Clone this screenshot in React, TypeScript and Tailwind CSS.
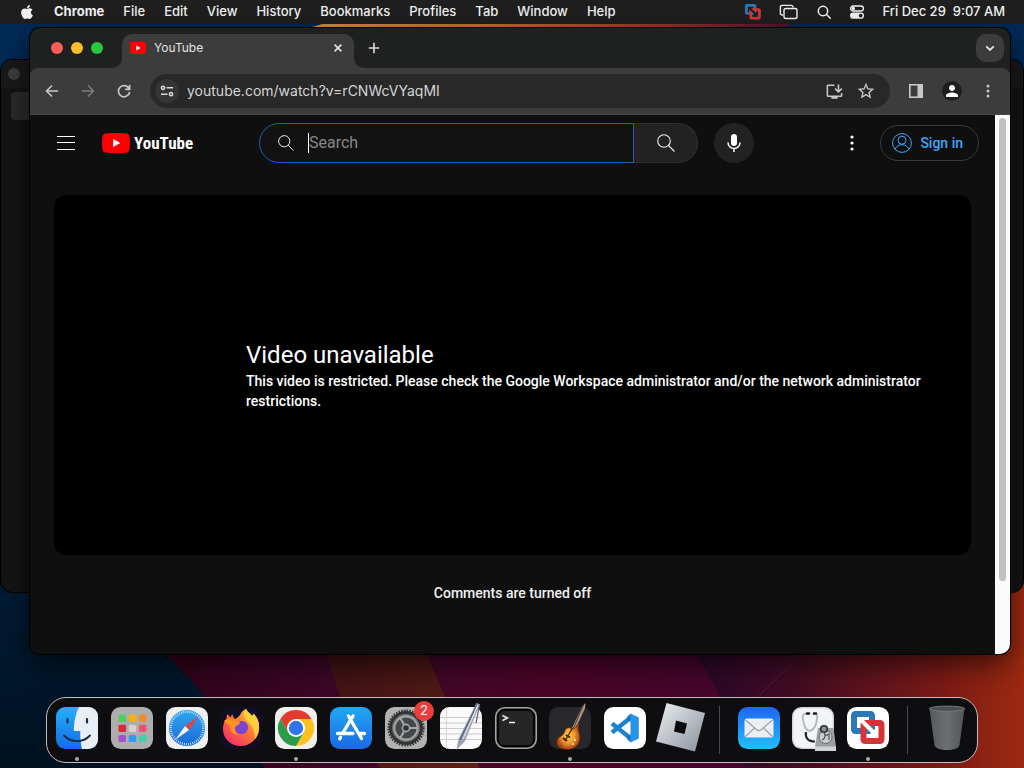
import { FaApple } from "react-icons/fa"
import { MdInstallDesktop, MdPerson, MdStarBorder } from "react-icons/md"

const menus = ["File", "Edit", "View", "History", "Bookmarks", "Profiles", "Tab", "Window", "Help"]

function Wallpaper() {
  return (
    <svg className="absolute inset-0 h-full w-full" viewBox="0 0 1024 768" preserveAspectRatio="none" aria-hidden="true">
      <defs>
        <linearGradient id="wall-top" x1="0" x2="1" y1="0" y2="0">
          <stop offset="0" stopColor="#d99038" />
          <stop offset="0.35" stopColor="#d2692f" />
          <stop offset="0.7" stopColor="#a8322a" />
          <stop offset="1" stopColor="#4a1030" />
        </linearGradient>
        <linearGradient id="wall-side" x1="0" x2="0" y1="0" y2="1">
          <stop offset="0" stopColor="#002b57" />
          <stop offset="0.75" stopColor="#001c36" />
          <stop offset="1" stopColor="#001220" />
        </linearGradient>
        <linearGradient id="wall-magenta" x1="0" x2="1" y1="0" y2="0">
          <stop offset="0" stopColor="#2e0418" />
          <stop offset="0.22" stopColor="#3d0728" />
          <stop offset="0.45" stopColor="#4a0526" />
          <stop offset="1" stopColor="#3a0836" />
        </linearGradient>
        <linearGradient id="wall-rust" x1="0" x2="1" y1="0" y2="1">
          <stop offset="0" stopColor="#3a1014" />
          <stop offset="1" stopColor="#5e2016" />
        </linearGradient>
        <linearGradient id="wall-red" x1="0" x2="1" y1="0" y2="0">
          <stop offset="0" stopColor="#26062a" />
          <stop offset="0.35" stopColor="#440d22" />
          <stop offset="0.75" stopColor="#7a1a16" />
          <stop offset="1" stopColor="#9c2a10" />
        </linearGradient>
      </defs>
      <rect width="1024" height="768" fill="url(#wall-side)" />
      <path d="M308 28 L330 22 H800 L780 28 Z" fill="url(#wall-top)" />
      <path d="M160 650 Q185 672 205 697 L265 768 H1024 V560 Z" fill="url(#wall-magenta)" />
      <path d="M322 640 L340 697 L380 768 H480 L445 697 L425 650 Z" fill="url(#wall-rust)" />
      <path d="M685 640 Q705 665 720 697 L745 768 H1024 V560 Z" fill="url(#wall-red)" />
      <path d="M795 660 L755 700" stroke="#5b1740" strokeWidth="1" />
    </svg>
  )
}

function VmGlyph({ arrow }: { arrow: string }) {
  return (
    <>
      <rect x="7" y="7" width="18" height="17" rx="1.500" fill="none" stroke="#2a78b5" strokeWidth="6" />
      <rect x="16.500" y="16" width="18" height="18" rx="1.500" fill="none" stroke="#d7343a" strokeWidth="6" />
      <path d="M14 13l13 13" stroke={arrow} strokeWidth="4" />
      <path d="M30 20v10.500H19.500Z" fill={arrow} />
    </>
  )
}

function MenuBar() {
  return (
    <header className="relative flex h-6 items-center justify-between bg-[#1f1f1f] px-[19px] text-[13px] font-medium text-[#f1f1f1]">
      <nav className="flex items-center gap-[19px]" aria-label="Menu bar">
        <button aria-label="Apple menu">
          <FaApple size={16} />
        </button>
        <button className="font-bold">Chrome</button>
        {menus.map((menu) => (
          <button key={menu}>{menu}</button>
        ))}
      </nav>
      <div className="flex items-center gap-[17px]">
        <button aria-label="VMware">
          <svg width="18" height="18" viewBox="2 2 38 38" aria-hidden="true">
            <VmGlyph arrow="#1f1f1f" />
          </svg>
        </button>
        <button aria-label="Mission Control">
          <svg width="20" height="18" viewBox="0 0 20 18" fill="none" stroke="currentColor" strokeWidth="1.400" aria-hidden="true">
            <path d="M4 12H3a1.600 1.600 0 0 1-1.600-1.600V4A1.600 1.600 0 0 1 3 2.400h9.500A1.600 1.600 0 0 1 14 4v.6" />
            <rect x="5" y="5.500" width="13" height="10" rx="1.800" />
          </svg>
        </button>
        <button aria-label="Spotlight">
          <svg width="16" height="16" viewBox="0 0 16 16" fill="none" stroke="currentColor" strokeWidth="1.500" aria-hidden="true">
            <circle cx="7" cy="7" r="4.700" />
            <path d="M10.500 10.500L14.300 14.300" strokeLinecap="round" />
          </svg>
        </button>
        <button aria-label="Control Center">
          <svg width="16" height="16" viewBox="0 0 16 16" aria-hidden="true">
            <rect x="1.600" y="2" width="12.800" height="5" rx="2.500" fill="none" stroke="currentColor" strokeWidth="1.300" />
            <circle cx="4.300" cy="4.500" r="1.700" fill="currentColor" />
            <rect x="1" y="8.500" width="14" height="6.300" rx="3.100" fill="currentColor" />
            <circle cx="11.700" cy="11.600" r="1.900" fill="#1f1f1f" />
          </svg>
        </button>
        <time className="whitespace-pre">Fri Dec 29  9:07 AM</time>
      </div>
    </header>
  )
}

function BackWindow() {
  return (
    <div className="absolute inset-x-0 bottom-[175px] top-[59px] overflow-hidden rounded-xl border border-black bg-[#141414]">
      <div className="flex h-7 items-center bg-[#191919] pl-[7px]">
        <span className="h-3 w-3 rounded-full bg-[#3d3d3d]" />
      </div>
      <div className="ml-2.5 mt-1 h-7 w-10 rounded bg-[#2a2a2a]" />
    </div>
  )
}

function TabStrip() {
  return (
    <div className="flex h-10 items-end bg-[#1f2121] pr-1.5">
      <div className="mb-3.5 ml-[21px] flex gap-2">
        <button aria-label="Close window" className="h-3 w-3 rounded-full bg-[#f95e57]" />
        <button aria-label="Minimize window" className="h-3 w-3 rounded-full bg-[#fbbc2e]" />
        <button aria-label="Zoom window" className="h-3 w-3 rounded-full bg-[#28c840]" />
      </div>
      <div className="relative ml-[19px] flex h-[34px] w-[232px] items-center rounded-t-[10px] bg-[#3c3c3c] pb-1.5 pl-2 pr-2">
        <svg className="absolute -left-2.5 bottom-0" width="10" height="10" aria-hidden="true">
          <path d="M10 0V10H0A10 10 0 0 0 10 0Z" fill="#3c3c3c" />
        </svg>
        <svg className="absolute -right-2.5 bottom-0" width="10" height="10" aria-hidden="true">
          <path d="M0 0V10H10A10 10 0 0 1 0 0Z" fill="#3c3c3c" />
        </svg>
        <svg width="16" height="12" viewBox="0 0 16 12" aria-hidden="true">
          <rect width="16" height="12" rx="3" fill="#f00" />
          <path d="M6.300 3.400v5.200L10.800 6Z" fill="#fff" />
        </svg>
        <span className="ml-2 flex-1 text-xs text-[#e3e3e3]">YouTube</span>
        <button aria-label="Close tab" className="grid h-4 w-4 place-items-center text-[#e3e3e3]">
          <svg width="8" height="8" viewBox="0 0 8 8" stroke="currentColor" strokeWidth="1.600" aria-hidden="true">
            <path d="M.6.6l6.800 6.800M7.400.6L.6 7.400" />
          </svg>
        </button>
      </div>
      <button aria-label="New tab" className="mb-1.5 ml-1.5 grid h-7 w-7 place-items-center text-[#dcdcdc]">
        <svg width="12" height="12" viewBox="0 0 12 12" stroke="currentColor" strokeWidth="1.600" aria-hidden="true">
          <path d="M6 .8v10.400M.8 6h10.400" />
        </svg>
      </button>
      <button aria-label="Search tabs" className="mb-1.5 ml-auto grid h-7 w-7 place-items-center rounded-[10px] bg-[#3c3c3c] text-[#e3e3e3]">
        <svg width="10" height="7" viewBox="0 0 10 7" fill="none" stroke="currentColor" strokeWidth="1.800" aria-hidden="true">
          <path d="M1.300 1.300L5 5l3.700-3.700" />
        </svg>
      </button>
    </div>
  )
}

const toolButton = "grid h-7 w-7 shrink-0 place-items-center rounded-full text-[#c7c7c7]"

function Toolbar() {
  return (
    <div className="flex h-[47px] items-center gap-2 rounded-t-lg border-b border-[#484848] bg-[#3c3c3c] px-2">
      <button aria-label="Back" className={toolButton}>
        <svg width="14" height="14" viewBox="0 0 14 14" fill="none" stroke="currentColor" strokeWidth="1.600" aria-hidden="true">
          <path d="M13 7H2M7 1.500L1.500 7 7 12.500" />
        </svg>
      </button>
      <button aria-label="Forward" disabled className={toolButton}>
        <svg width="14" height="14" viewBox="0 0 14 14" fill="none" stroke="#7c7c7c" strokeWidth="1.600" aria-hidden="true">
          <path d="M1 7h11M7 1.500L12.500 7 7 12.500" />
        </svg>
      </button>
      <button aria-label="Reload" className={toolButton}>
        <svg width="14" height="14" viewBox="0 0 14 14" fill="none" stroke="currentColor" strokeWidth="1.700" aria-hidden="true">
          <path d="M12 4.500A5.600 5.600 0 1 0 12.600 8M12.600 1v4.300H8.200" />
        </svg>
      </button>
      <div className="mx-1 flex h-[34px] flex-1 items-center rounded-full bg-[#282828] pl-[5px] pr-2.5">
        <button aria-label="View site information" className="grid h-6 w-6 place-items-center rounded-full bg-[#353535] text-[#dcdcdc]">
          <svg width="14" height="12" viewBox="0 0 14 12" fill="none" stroke="currentColor" strokeWidth="1.500" aria-hidden="true">
            <circle cx="3" cy="2.800" r="1.600" />
            <path d="M6.500 2.800H13M1 9.200h6.500" />
            <circle cx="11" cy="9.200" r="1.600" />
          </svg>
        </button>
        <input
          aria-label="Address"
          className="ml-2 min-w-0 flex-1 bg-transparent text-sm text-[#d5d5d5] outline-none"
          defaultValue="youtube.com/watch?v=rCNWcVYaqMI"
        />
        <button aria-label="Install YouTube" className={toolButton}>
          <MdInstallDesktop size={19} />
        </button>
        <button aria-label="Bookmark this tab" className={`${toolButton} ml-1`}>
          <MdStarBorder size={20} />
        </button>
      </div>
      <button aria-label="Side panel" className={toolButton}>
        <svg width="14" height="14" viewBox="0 0 14 14" aria-hidden="true">
          <rect x=".8" y=".8" width="12.400" height="12.400" fill="none" stroke="currentColor" strokeWidth="1.600" />
          <path d="M8.500 1H13v12H8.500Z" fill="currentColor" />
        </svg>
      </button>
      <button aria-label="Profile" className={toolButton}>
        <span className="grid h-5 w-5 place-items-center rounded-full bg-[#1f1f1f] text-white">
          <MdPerson size={18} />
        </span>
      </button>
      <button aria-label="Chrome menu" className={toolButton}>
        <svg width="4" height="14" viewBox="0 0 4 14" fill="currentColor" aria-hidden="true">
          <circle cx="2" cy="2" r="1.500" />
          <circle cx="2" cy="7" r="1.500" />
          <circle cx="2" cy="12" r="1.500" />
        </svg>
      </button>
    </div>
  )
}

function SearchIcon({ size }: { size: number }) {
  return (
    <svg width={size} height={size} viewBox="0 0 18 18" fill="none" stroke="#f1f1f1" strokeWidth="1.100" aria-hidden="true">
      <circle cx="7" cy="7" r="6.300" />
      <path d="M11.500 11.500l6 6" />
    </svg>
  )
}

function Masthead() {
  return (
    <header className="flex h-14 items-center">
      <div className="flex w-[229px] items-center gap-6 pl-6">
        <button aria-label="Guide" className="grid h-6 w-6 place-items-center">
          <svg width="18" height="14" viewBox="0 0 18 14" stroke="#fff" aria-hidden="true">
            <path d="M0 .5h18M0 6.500h18M0 13.500h18" />
          </svg>
        </button>
        <a href="#" className="flex items-center gap-1 text-white" aria-label="YouTube Home">
          <svg width="28" height="20" viewBox="0 0 28 20" aria-hidden="true">
            <path d="M27.400 3.100A3.500 3.500 0 0 0 25 .6C22.800 0 14 0 14 0S5.200 0 3 .6A3.500 3.500 0 0 0 .6 3.100C0 5.300 0 10 0 10s0 4.700.6 6.900A3.500 3.500 0 0 0 3 19.400C5.200 20 14 20 14 20s8.800 0 11-.6a3.500 3.500 0 0 0 2.400-2.500C28 14.700 28 10 28 10s0-4.700-.6-6.900Z" fill="#f00" />
            <path d="M11.200 5.900v8.200l7.200-4.100Z" fill="#fff" />
          </svg>
          <span className="font-['Roboto_Condensed',Roboto,sans-serif] text-[17px] font-bold leading-5">YouTube</span>
        </a>
      </div>
      <form className="flex h-10 flex-1" onSubmit={(e) => e.preventDefault()}>
        <div className="flex flex-1 items-center rounded-l-full border border-[#1c62b9] bg-[#121212] pl-[18px]">
          <SearchIcon size={16} />
          <span className="ml-3.5 h-5 w-px bg-white" />
          <input aria-label="Search videos" placeholder="Search" className="min-w-0 flex-1 bg-transparent text-base text-white outline-none placeholder:text-[#888]" />
        </div>
        <button aria-label="Search" className="grid w-16 place-items-center rounded-r-full border border-l-0 border-[#303030] bg-[#222]">
          <SearchIcon size={18} />
        </button>
      </form>
      <button aria-label="Search with your voice" className="ml-4 grid h-10 w-10 place-items-center rounded-full bg-[#222]">
        <svg width="14" height="18" viewBox="0 0 14 18" aria-hidden="true">
          <rect x="4" y="0" width="6" height="12" rx="3" fill="#fff" />
          <path d="M1 8.500a6 6 0 0 0 12 0M7 14.500V18" fill="none" stroke="#fff" strokeWidth="1.500" />
        </svg>
      </button>
      <div className="flex w-[241px] items-center justify-end gap-4 pr-4">
        <button aria-label="Settings" className="grid h-6 w-6 place-items-center">
          <svg width="4" height="16" viewBox="0 0 4 16" fill="#fff" aria-hidden="true">
            <circle cx="2" cy="2" r="1.600" />
            <circle cx="2" cy="8" r="1.600" />
            <circle cx="2" cy="14" r="1.600" />
          </svg>
        </button>
        <a href="#" className="flex h-9 items-center gap-2 rounded-full border border-[#3b3b3b] pl-[11px] pr-[15px] text-sm font-medium text-[#3ea6ff]">
          <svg width="20" height="20" viewBox="0 0 20 20" fill="none" stroke="currentColor" aria-hidden="true">
            <circle cx="10" cy="10" r="9.400" />
            <circle cx="10" cy="7.200" r="4" />
            <path d="M3.200 16.500c.8-3 3.400-4.800 6.800-4.800s6 1.800 6.800 4.800" />
          </svg>
          Sign in
        </a>
      </div>
    </header>
  )
}

function ChromeWindow() {
  return (
    <div className="absolute bottom-[114px] left-[30px] right-[14px] top-7 flex flex-col overflow-hidden rounded-[10px] bg-[#1f2121] shadow-[0_0_0_1px_#000,0_10px_28px_rgba(0,0,0,0.6)]">
      <TabStrip />
      <Toolbar />
      <div className="flex min-h-0 flex-1 bg-[#0f0f0f]">
        <main className="flex min-w-0 flex-1 flex-col font-[Roboto,sans-serif] text-white">
          <Masthead />
          <section className="mx-6 mt-6 flex h-[360px] flex-col justify-center rounded-xl bg-black pl-48 pr-5">
            <h1 className="text-2xl leading-8">Video unavailable</h1>
            <p className="text-sm font-medium leading-5">
              This video is restricted. Please check the Google Workspace administrator and/or the network administrator
              restrictions.
            </p>
          </section>
          <p className="mt-7 text-center text-sm font-medium text-[#f1f1f1]">Comments are turned off</p>
        </main>
        <div className="w-[15px] bg-[#fafafa] px-1 pt-[3px]">
          <div className="h-[463px] rounded-full bg-[#c1c1c1]" />
        </div>
      </div>
    </div>
  )
}

function FinderIcon() {
  return (
    <>
      <rect width="42" height="42" rx="9.500" fill="url(#finder-blue)" />
      <path d="M23 0C19.500 7 18 14.500 17.800 24h6.500c-.2 6 .3 12 1.600 18h6.600A9.500 9.500 0 0 0 42 32.500v-23A9.500 9.500 0 0 0 32.500 0Z" fill="#e9eef5" />
      <path d="M11.500 12v3.500M31 12v3.500" stroke="#173049" strokeWidth="2.200" strokeLinecap="round" />
      <path d="M8 28.500c7 7.500 19 7.500 26 0" fill="none" stroke="#173049" strokeWidth="1.900" strokeLinecap="round" />
    </>
  )
}

const padColors = ["#4fd05a", "#f5b318", "#f28c26", "#e0283a", "#d4d4d4", "#f2506e", "#a34fd0", "#3298f0", "#3fd0ac"]

function LaunchpadIcon() {
  return (
    <>
      <rect width="42" height="42" rx="9.500" fill="#adadad" />
      {padColors.map((color, i) => (
        <rect key={color} x={7.500 + (i % 3) * 10.200} y={7.500 + Math.floor(i / 3) * 10.200} width="7.500" height="7.200" rx="1.500" fill={color} />
      ))}
    </>
  )
}

function SafariIcon() {
  return (
    <>
      <rect width="42" height="42" rx="9.500" fill="#eef0f2" />
      <circle cx="21" cy="21" r="18" fill="url(#safari-blue)" />
      <circle cx="21" cy="21" r="16.200" fill="none" stroke="#e5f3fd" strokeWidth="2.200" strokeDasharray=".8 1.320" />
      <path d="M33 9L19 19l4 4Z" fill="#e8413c" />
      <path d="M9 33L19 19l4 4Z" fill="#f4f4f4" />
    </>
  )
}

function FirefoxIcon() {
  return (
    <>
      <rect width="42" height="42" rx="9.500" fill="#120d22" />
      <path d="M26 2c1.500 3 4 4 6 7 1-1 1.500-1.500 1.500-2.500C38 11 39.500 16 39 22c-.8 10-9 17-18.500 17S3 32 3 22c0-4 1-7.500 3.500-10.500l.7-4.500 3.300 3.500L12.500 7c.3 2.500 1 3.500 2.500 5 3-1.500 4-2.500 6-5.500 1-2 2.500-3.500 5-4.500Z" fill="url(#fox-fire)" />
      <path d="M26 2c1.500 3 4 4 6 7 1-1 1.500-1.500 1.500-2.500C38 11 39.500 16 39 22c-.3 4-2 8-4 10 0-9-3-13-7.500-17.500C23.500 11 23 6 26 2Z" fill="#ffd53d" opacity=".85" />
      <circle cx="21.500" cy="20.500" r="6.600" fill="#7a45d2" />
      <path d="M4 14c4-3 8-2 11 0 2 1 5 .5 5 1.500 0 2-4 3-5 4.500-1 3 .5 6 4 8-7-.5-10-5-9-10-2-1-4-2-6-4Z" fill="#ff9425" />
    </>
  )
}

function ChromeIcon() {
  return (
    <>
      <rect width="42" height="42" rx="9.500" fill="#f1efec" />
      <path d="M21 12H36.600A18 18 0 0 1 21 39L28.800 25.500Z" fill="#fcc31e" />
      <path d="M5.400 12A18 18 0 0 1 36.600 12H21L13.200 25.500Z" fill="#e33b2e" />
      <path d="M5.400 12L13.200 25.500 21 21 28.800 25.500 21 39A18 18 0 0 1 5.400 12Z" fill="#2b9c4a" />
      <circle cx="21" cy="21" r="9" fill="#fff" />
      <circle cx="21" cy="21" r="7.200" fill="#2f74e8" />
    </>
  )
}

function AppStoreIcon() {
  return (
    <>
      <rect width="42" height="42" rx="9.500" fill="url(#store-blue)" />
      <g stroke="#fff" strokeWidth="3.300" strokeLinecap="round">
        <path d="M23 9L12.500 26.500M18.500 9L31.500 31.500M7.500 26.500h15.500M30 26.500h4.500M10.500 30.500l-.8 1.300" />
      </g>
    </>
  )
}

function SettingsIcon() {
  return (
    <>
      <rect width="42" height="42" rx="9.500" fill="#b2b3b0" />
      <circle cx="21" cy="21" r="17.500" fill="none" stroke="#3a3d3e" strokeWidth="2.400" strokeDasharray="1.600 1.150" />
      <circle cx="21" cy="21" r="15.400" fill="#77797a" stroke="#303334" strokeWidth="3" />
      <circle cx="21" cy="21" r="11.500" fill="#45484a" stroke="#a5a7a7" strokeWidth="1.800" />
      <circle cx="21" cy="21" r="3.600" fill="#303334" stroke="#a5a7a7" strokeWidth="1.600" />
      <path d="M25 21h8M19 17.500L15 10.500M19 24.500L15 31.500" stroke="#a5a7a7" strokeWidth="2.200" />
    </>
  )
}

function TextEditIcon() {
  return (
    <>
      <rect width="42" height="42" rx="9.500" fill="#fafafa" />
      <path d="M0 10.500h42M0 16h42M0 21.500h42M0 27h42M0 32.500h42" stroke="#c5c6ca" strokeWidth=".9" />
      <path d="M6.500 0v42" stroke="#d9c8c0" strokeWidth=".8" />
      <path d="M36.500-4l3.500 1.200L25 34l-8.500 9 2-11Z" fill="#98a2b3" />
      <path d="M37.500-3.500L20 33M39.500-2L36 16" stroke="#596376" strokeWidth="1.300" fill="none" />
      <path d="M38-2L23 32" stroke="#dfe5ee" strokeWidth="1.200" />
    </>
  )
}

function TerminalIcon() {
  return (
    <>
      <rect x=".8" y=".8" width="40.400" height="40.400" rx="9" fill="#060606" stroke="#a5a5a5" strokeWidth="1.600" />
      <rect x="4" y="4" width="34" height="34" rx="5.500" fill="#262626" />
      <path d="M7.500 8.500l5 2.500-5 2.500M14 15.500h6" fill="none" stroke="#f2f2f2" strokeWidth="1.400" />
    </>
  )
}

function GarageBandIcon() {
  return (
    <>
      <rect width="42" height="42" rx="9.500" fill="#28282a" />
      <path d="M23 21L33.500-1l3-3L36 1 26 23Z" fill="#b39a87" />
      <path d="M24.500 21L34.500-2" stroke="#4b372c" strokeWidth="1" />
      <path d="M18 21c2-1 4 0 5 1 2 1 5-3 7-7 1 2-1 6 0 10 3 7 0 15-7 17-8 2-16-1-15.500-7 .5-5 4-5 6.500-7.500 2-2.500 1.500-5 4-6.500Z" fill="url(#guitar-burst)" stroke="#4b1e0c" strokeWidth=".8" />
      <path d="M16 34l7-12" stroke="#4a2510" strokeWidth="1.300" />
      <path d="M14 31l4 3M17 28l4 2.500" stroke="#3a2114" strokeWidth="1.800" />
      <circle cx="26" cy="33" r="1" fill="#fff0a0" />
      <circle cx="24" cy="37" r="1" fill="#fff0a0" />
    </>
  )
}

function CodeIcon() {
  return (
    <>
      <rect width="42" height="42" rx="9.500" fill="#fff" />
      <path d="M8 16.500L28 32.500M8 25.500L28 9.500" stroke="#1e83cf" strokeWidth="4.400" strokeLinejoin="round" />
      <path d="M26.500 6.500L34.800 10.500V31.500L26.500 35.500Z" fill="#2694e8" />
      <path d="M26.500 6.500l-4 4 4 5ZM26.500 35.500l-4-4 4-5Z" fill="#1a79c2" />
    </>
  )
}

function RobloxIcon() {
  return (
    <>
      <path d="M7.500-4L46 6 36 44.500-3 34.500Z" fill="url(#roblox-steel)" />
      <path d="M17 13.500L28 16.500 25.500 27 15 24.500Z" fill="#0c0c0d" />
    </>
  )
}

function MailIcon() {
  return (
    <>
      <rect width="42" height="42" rx="9.500" fill="url(#mail-blue)" />
      <rect x="6.500" y="11.500" width="29" height="19" rx="2.500" fill="#eceef1" />
      <path d="M7.500 13L18.500 22.500c1.500 1.400 3.500 1.400 5 0L34.500 13M7.500 29.500l9-8.500M34.500 29.500l-9-8.500" fill="none" stroke="#9aa2ac" strokeWidth="1.200" />
    </>
  )
}

function DiskUtilityIcon() {
  return (
    <>
      <rect width="42" height="42" rx="9.500" fill="#d5d7da" />
      <rect x="1.500" y="1.500" width="39" height="39" rx="8" fill="#f3f4f6" />
      <path d="M16 7c-6-1.500-6 3-4.500 8 1 5 2 8 6 9 4-1 6-4 7-9 1-5 1.500-9-3-8" fill="none" stroke="#b4b8be" strokeWidth="1.800" />
      <path d="M15 6.500h2M22 6.500h2" stroke="#222" strokeWidth="2.600" strokeLinecap="round" />
      <path d="M14 25c-1 6 2 9.500 9 9.500" fill="none" stroke="#24282c" strokeWidth="2.200" />
      <path d="M26 21h15.500L44 40v3.500H23V40Z" fill="#9da1a3" />
      <path d="M23 39.500h21V44H23Z" fill="#d0d3d4" />
      <circle cx="33.500" cy="30" r="6.500" fill="#c9cdcf" stroke="#696e70" />
      <circle cx="32" cy="22" r="3.300" fill="#8d9294" stroke="#2c3032" strokeWidth="1.600" />
      <path d="M31 25c3 2 3 6-1 8M33 29l4-2v6" fill="none" stroke="#4d5254" strokeWidth="1.200" />
    </>
  )
}

function VmwareIcon() {
  return (
    <>
      <rect width="42" height="42" rx="9.500" fill="#fff" />
      <VmGlyph arrow="#fff" />
    </>
  )
}

function TrashIcon() {
  return (
    <>
      <path d="M3.500 1.500L8.500 38c.6 3.500 6 5 12.500 5s12-1.500 12.500-5L38.500 1.500Z" fill="url(#bin-grey)" />
      <ellipse cx="21" cy="1.700" rx="17.700" ry="2.600" fill="#4b4e51" stroke="#7a7d80" strokeWidth=".9" />
    </>
  )
}

const apps = [
  { name: "Finder", Icon: FinderIcon, running: true },
  { name: "Launchpad", Icon: LaunchpadIcon },
  { name: "Safari", Icon: SafariIcon },
  { name: "Firefox", Icon: FirefoxIcon },
  { name: "Google Chrome", Icon: ChromeIcon, running: true },
  { name: "App Store", Icon: AppStoreIcon },
  { name: "System Settings", Icon: SettingsIcon, badge: 2 },
  { name: "TextEdit", Icon: TextEditIcon },
  { name: "Terminal", Icon: TerminalIcon },
  { name: "GarageBand", Icon: GarageBandIcon, running: true },
  { name: "Visual Studio Code", Icon: CodeIcon },
  { name: "Roblox", Icon: RobloxIcon },
  { name: "Mail", Icon: MailIcon, divider: true },
  { name: "Disk Utility", Icon: DiskUtilityIcon },
  { name: "VMware Fusion", Icon: VmwareIcon, running: true },
  { name: "Trash", Icon: TrashIcon, divider: true },
]

function DockDefs() {
  return (
    <svg width="0" height="0" className="absolute" aria-hidden="true">
      <defs>
        <linearGradient id="finder-blue" x1="0" x2="0" y1="0" y2="1">
          <stop offset="0" stopColor="#22b1fa" />
          <stop offset="1" stopColor="#1769e8" />
        </linearGradient>
        <linearGradient id="safari-blue" x1="0" x2="0" y1="0" y2="1">
          <stop offset="0" stopColor="#2fa8ee" />
          <stop offset="1" stopColor="#1c68d8" />
        </linearGradient>
        <linearGradient id="fox-fire" x1="1" x2="0.2" y1="0" y2="1">
          <stop offset="0" stopColor="#ffe14a" />
          <stop offset="0.5" stopColor="#ff7a2d" />
          <stop offset="1" stopColor="#f52b6c" />
        </linearGradient>
        <linearGradient id="store-blue" x1="0" x2="0" y1="0" y2="1">
          <stop offset="0" stopColor="#1fa9f3" />
          <stop offset="1" stopColor="#1c68e4" />
        </linearGradient>
        <radialGradient id="guitar-burst">
          <stop offset="0" stopColor="#ffd34d" />
          <stop offset="0.55" stopColor="#f0952a" />
          <stop offset="1" stopColor="#a3401a" />
        </radialGradient>
        <linearGradient id="roblox-steel" x1="0" x2="1" y1="0" y2="1">
          <stop offset="0" stopColor="#eef0f2" />
          <stop offset="1" stopColor="#87919b" />
        </linearGradient>
        <linearGradient id="mail-blue" x1="0" x2="0" y1="0" y2="1">
          <stop offset="0" stopColor="#2065f0" />
          <stop offset="1" stopColor="#1fc0fb" />
        </linearGradient>
        <linearGradient id="bin-grey" x1="0" x2="1" y1="0" y2="0">
          <stop offset="0" stopColor="#56595c" />
          <stop offset="0.5" stopColor="#6d7073" />
          <stop offset="1" stopColor="#515457" />
        </linearGradient>
      </defs>
    </svg>
  )
}

function Dock() {
  return (
    <nav className="relative mx-[46px] mb-[5px] mt-auto" aria-label="Dock">
      <DockDefs />
      <ul className="flex h-[66px] justify-between rounded-[20px] border border-[#c4bcc0] bg-[#0e0e10] px-[9px] pt-[9px]">
        {apps.map(({ name, Icon, running, badge, divider }) => (
          <li key={name} className="contents">
            {divider && <span className="mx-[5px] -mt-px h-12 w-px bg-[#4a4a4c]" />}
            <button aria-label={name} className="relative flex flex-col items-center gap-2">
              <svg width="42" height="42" viewBox="0 0 42 42" className="overflow-visible" aria-hidden="true">
                <Icon />
              </svg>
              {running && <span className="h-1 w-1 rounded-full bg-[#a8a8a8]" />}
              {badge && (
                <span className="absolute -right-[7px] -top-1.5 grid h-5 w-5 place-items-center rounded-full bg-[#ea3d3d] text-[13px] text-white">
                  {badge}
                </span>
              )}
            </button>
          </li>
        ))}
      </ul>
    </nav>
  )
}

export default function App() {
  return (
    <div className="relative flex min-h-screen flex-col overflow-hidden bg-[#001220] font-[Inter,sans-serif]">
      <Wallpaper />
      <MenuBar />
      <BackWindow />
      <ChromeWindow />
      <Dock />
    </div>
  )
}
